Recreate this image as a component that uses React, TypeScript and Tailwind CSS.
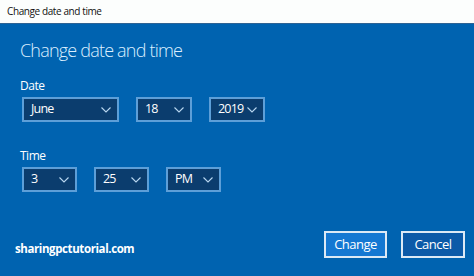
function Chevron() {
  return (
    <svg width="10" height="6" viewBox="0 0 10 6" fill="none" className="shrink-0">
      <polyline points="0.5,0.5 5,5 9.5,0.5" stroke="#b9d7f0" strokeWidth="1.1" />
    </svg>
  )
}

function Dropdown({ value, width }: { value: string; width: string }) {
  return (
    <div
      className={`${width} h-[25px] border-2 border-[#5d9fd8] bg-[#0b3d6e] flex items-center justify-between pl-[7px] pr-[6px] text-[12.5px] tracking-[-0.8px] text-white`}
    >
      <span>{value}</span>
      <Chevron />
    </div>
  )
}

export default function App() {
  return (
    <div className="w-[474px] h-[276px] flex flex-col font-['Open_Sans',sans-serif] overflow-hidden">
      {/* Title bar */}
      <div className="h-[24px] bg-[#fcfefd] border-b border-[#2d6394] flex items-center px-[7px] text-[10px] text-[#111] tracking-[-0.4px]">
        Change date and time
      </div>

      {/* Body */}
      <div className="flex-1 bg-[#0063b0] flex flex-col px-[20px]">
        <h1 className="mt-[12px] text-[18px] leading-[28px] font-light text-[#dcefff] tracking-[-0.8px]">
          Change date and time
        </h1>

        <div className="mt-[14px] text-[12px] leading-[16px] tracking-[-0.5px] text-white">Date</div>
        <div className="mt-[3px] ml-[2px] flex gap-[17px]">
          <Dropdown value="June" width="w-[97px]" />
          <Dropdown value="18" width="w-[56px]" />
          <Dropdown value="2019" width="w-[56px]" />
        </div>

        <div className="mt-[26px] text-[12px] leading-[16px] tracking-[-0.5px] text-white">Time</div>
        <div className="mt-[3px] ml-[2px] flex gap-[17px]">
          <Dropdown value="3" width="w-[55px]" />
          <Dropdown value="25" width="w-[55px]" />
          <Dropdown value="PM" width="w-[55px]" />
        </div>

        <div className="mt-auto mb-[18px] flex items-end justify-between">
          <span className="ml-[-5px] mb-[1px] text-[11.5px] font-bold text-white tracking-[-0.4px]">
            sharingpctutorial.com
          </span>
          <div className="flex gap-[14px] mr-[-11px]">
            <button className="w-[63px] h-[27px] border-2 border-[#dce9f5] bg-[#1478d2] text-[13px] tracking-[-0.5px] text-white">
              Change
            </button>
            <button className="w-[64px] h-[27px] border-2 border-[#dce9f5] bg-[#0b5aa8] text-[13px] tracking-[-0.5px] text-white">
              Cancel
            </button>
          </div>
        </div>
      </div>
    </div>
  )
}
